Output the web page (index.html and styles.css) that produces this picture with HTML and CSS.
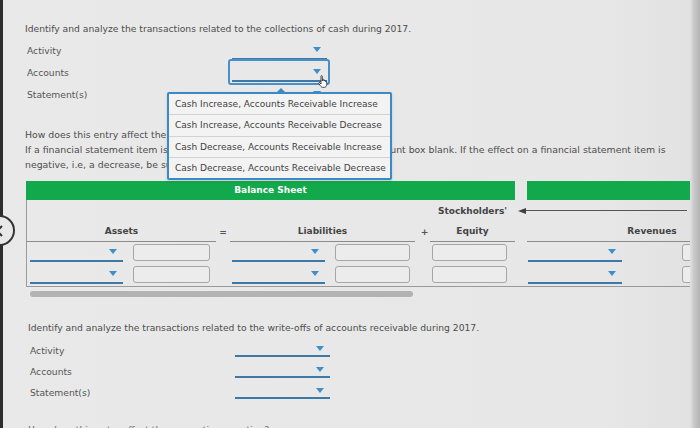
FILE: index.html
```html
<!DOCTYPE html>
<html lang="en">
<head>
<meta charset="utf-8">
<title>Balance Sheet</title>
<link rel="stylesheet" href="styles.css">
</head>
<body>
<div class="nav-prev"><svg width="10" height="12" viewBox="0 0 10 12"><path d="M7 1 L2 6 L7 11" fill="none" stroke="#333" stroke-width="2"/></svg></div>
<main class="page">
  <p class="q">Identify and analyze the transactions related to the collections of cash during 2017.</p>
  <div class="fields">
    <div class="lbl">Activity</div><div class="sel"><span class="caret"></span></div>
    <div class="lbl">Accounts</div>
    <div class="sel sel-focus"><span class="caret"></span>
      <span class="ring"></span>
      <svg class="cursor" width="11" height="13" viewBox="0 0 11 13"><path d="M3 1.2 C3 0.5 4.3 0.5 4.3 1.2 V6 L4.6 4.6 C4.8 4 5.9 4 5.9 4.7 V6 C6 5.2 7.3 5.2 7.3 6 V6.6 C7.5 6 8.7 6 8.7 6.8 V9.5 C8.7 11 7.8 12.3 6.5 12.3 H4.6 C3.6 12.3 3 11.6 2.4 10.8 L0.8 8.4 C0.4 7.8 1.3 7.1 1.8 7.7 L3 9 Z" fill="#fff" stroke="#222" stroke-width="0.8"/></svg>
      <div class="popup">
        <div class="opt">Cash Increase, Accounts Receivable Increase</div>
        <div class="opt">Cash Increase, Accounts Receivable Decrease</div>
        <div class="opt">Cash Decrease, Accounts Receivable Increase</div>
        <div class="opt">Cash Decrease, Accounts Receivable Decrease</div>
      </div>
    </div>
    <div class="lbl">Statement(s)</div><div class="sel"><span class="caret"></span></div>
  </div>
  <p class="instr">
    <span class="ln">How does this entry affect the accounting equation?</span>
    <span class="ln">If a financial statement item is not affected by the transaction, leave the account box blank. If the effect on a financial statement item is</span>
    <span class="ln">negative, i.e, a decrease, be sure to enter a minus sign.</span>
  </p>
  <div class="bs">
    <div class="bs-head">
      <div class="green g1">Balance Sheet</div>
      <div class="green g2"></div>
    </div>
    <div class="bs-body">
      <div class="fill"></div>
      <div class="sh">Stockholders'</div>
      <div class="arrow"><span class="tip"></span><span class="shaft"></span></div>

      <div class="h">Assets</div>
      <div class="op">=</div>
      <div class="h">Liabilities</div>
      <div class="op op2">+</div>
      <div class="h">Equity</div>
      <div></div>
      <div class="h">Revenues</div>
      <div class="h"></div>

      <div class="cell p3"><div class="sel s93"><span class="caret"></span></div><div class="box w77"></div></div>
      <div></div>
      <div class="cell p2"><div class="sel s93"><span class="caret"></span></div><div class="box w75"></div></div>
      <div></div>
      <div class="cell p2"><div class="box w75 nm"></div></div>
      <div></div>
      <div class="cell p1"><div class="sel s94"><span class="caret"></span></div><div class="box w75 far"></div></div>
      <div></div>

      <div class="cell p3"><div class="sel s93"><span class="caret"></span></div><div class="box w77"></div></div>
      <div></div>
      <div class="cell p2"><div class="sel s93"><span class="caret"></span></div><div class="box w75"></div></div>
      <div></div>
      <div class="cell p2"><div class="box w75 nm"></div></div>
      <div></div>
      <div class="cell p1"><div class="sel s94"><span class="caret"></span></div><div class="box w75 far"></div></div>
      <div></div>
    </div>
  </div>
  <div class="hscroll"><div class="thumb"></div></div>

  <section class="sec2">
    <p class="q">Identify and analyze the transactions related to the write-offs of accounts receivable during 2017.</p>
    <div class="fields f2">
      <div class="lbl">Activity</div><div class="sel"><span class="caret"></span></div>
      <div class="lbl">Accounts</div><div class="sel"><span class="caret"></span></div>
      <div class="lbl">Statement(s)</div><div class="sel"><span class="caret"></span></div>
    </div>
    <p class="q next">How does this entry affect the accounting equation?</p>
  </section>
</main>
</body>
</html>
```
FILE: styles.css
```css
html, body {
  margin: 0;
  height: 100%;
}
body {
  background: linear-gradient(to right, #2d2d2d 0, #2d2d2d 3px, #e9e9e9 3px, #e7e7e7 600px, #e2e2e2 690px, #c9c9c9 694px, #b4b4b4 700px);
  font-family: "DejaVu Sans", Verdana, sans-serif;
  font-size: 9.2px;
  color: #4d4d4d;
  overflow: hidden;
  position: relative;
}
.nav-prev {
  position: absolute;
  left: -16px;
  top: 215px;
  width: 31px;
  height: 31px;
  border: 2px solid #333;
  border-radius: 50%;
  background: #e8e8e8;
  display: flex;
  align-items: center;
  justify-content: flex-end;
  padding-right: 8px;
  box-sizing: border-box;
  z-index: 5;
}
.nav-prev svg { display: block; }

.page {
  padding: 23px 0 0 25px;
}
.q {
  margin: 0;
  line-height: 12px;
  white-space: nowrap;
}
.fields {
  margin: 5px 0 0 2px;
  display: grid;
  grid-template-columns: 205px 95px;
  grid-auto-rows: 22px;
}
.lbl {
  line-height: 22px;
  color: #555;
}
.sel {
  position: relative;
  height: 18px;
  border-bottom: 2px solid #3e78a6;
}
.caret {
  position: absolute;
  right: 6px;
  top: 7px;
  width: 0;
  height: 0;
  border-left: 4px solid transparent;
  border-right: 4px solid transparent;
  border-top: 5px solid #3d8fcc;
}
.sel-focus { z-index: 3; }
.ring {
  position: absolute;
  left: -4px;
  right: -3px;
  top: -3px;
  bottom: -5px;
  border: 2px solid #4790c8;
  border-radius: 3px;
}
.cursor {
  position: absolute;
  left: 86px;
  top: 13px;
  z-index: 6;
}
.popup {
  position: absolute;
  left: -65px;
  top: 30px;
  width: 225px;
  height: 88px;
  box-sizing: border-box;
  border: 2px solid #3b89c6;
  border-radius: 2px;
  background: #f3f3f3;
  box-shadow: 0 1px 3px rgba(0,0,0,0.15);
  display: flex;
  flex-direction: column;
  z-index: 4;
}
.popup::before {
  content: "";
  position: absolute;
  left: 108px;
  top: -6px;
  border-left: 4px solid transparent;
  border-right: 4px solid transparent;
  border-bottom: 4px solid #3b89c6;
}
.opt {
  flex: 1;
  display: flex;
  align-items: center;
  padding-left: 6px;
  font-size: 9px;
  color: #3f3f3f;
  white-space: nowrap;
  border-top: 1px solid #d2d2d2;
}
.opt:first-child { border-top: none; }

.instr {
  margin: 21px 0 0 0;
  line-height: 15px;
  font-size: 9.35px;
}
.ln {
  display: block;
  white-space: nowrap;
}

.bs {
  margin: 9px 0 0 1px;
  width: 664px;
  overflow: hidden;
}
.bs-head {
  display: flex;
  height: 19px;
  width: 900px;
}
.green {
  background: #12a84c;
  color: #fff;
  font-weight: bold;
  font-size: 9px;
  line-height: 19px;
  text-align: center;
}
.g1 { width: 489px; }
.g2 { width: 300px; margin-left: 12px; }
.bs-body {
  display: grid;
  grid-template-columns: 189px 14px 185px 15px 85px 12px 250px 200px;
  grid-template-rows: 22px 20px 22px 22px;
  width: 950px;
  border-left: 1px solid #9a9a9a;
  border-bottom: 1px solid #9a9a9a;
}
.fill { grid-column: 1 / 5; }
.sh {
  font-weight: bold;
  font-size: 9px;
  color: #444;
  text-align: center;
  line-height: 22px;
  white-space: nowrap;
}
.arrow {
  grid-column: 6 / 9;
  display: flex;
  align-items: center;
  padding-left: 3px;
  margin-top: -1px;
}
.tip {
  width: 0;
  height: 0;
  border-top: 3px solid transparent;
  border-bottom: 3px solid transparent;
  border-right: 8px solid #3f3f3f;
}
.shaft {
  width: 161px;
  height: 1.5px;
  background: #555;
}
.h {
  font-weight: bold;
  font-size: 9px;
  color: #444;
  text-align: center;
  line-height: 19px;
  border-bottom: 1px solid #8c8c8c;
}
.op {
  text-align: center;
  line-height: 20px;
  font-weight: bold;
  color: #555;
}
.op2 { padding-left: 4px; }
.cell {
  display: flex;
  align-items: flex-start;
}
.p1 { padding-left: 1px; }
.p2 { padding-left: 2px; }
.p3 { padding-left: 3px; }
.s93 { width: 93px; flex: none; }
.s94 { width: 94px; flex: none; }
.box {
  flex: none;
  height: 17px;
  margin-top: 2px;
  margin-left: 10px;
  box-sizing: border-box;
  border: 1px solid #a6a6a6;
  border-radius: 3px;
  background: #ececec;
}
.w77 { width: 77px; }
.w75 { width: 75px; }
.nm { margin-left: 0; }
.far { margin-left: 60px; }
.hscroll {
  margin: 4px 0 0 5px;
  height: 6px;
}
.thumb {
  width: 383px;
  height: 6px;
  border-radius: 3px;
  background: #b3b3b3;
}

.sec2 {
  padding-left: 3px;
  margin-top: 25px;
}
.f2 {
  margin-top: 6px;
  grid-auto-rows: 21px;
}
.f2 .lbl { line-height: 21px; }
.f2 .sel { height: 15px; }
.f2 .caret { top: 6px; }
.next {
  margin-top: 21px;
  color: #666;
}
```
